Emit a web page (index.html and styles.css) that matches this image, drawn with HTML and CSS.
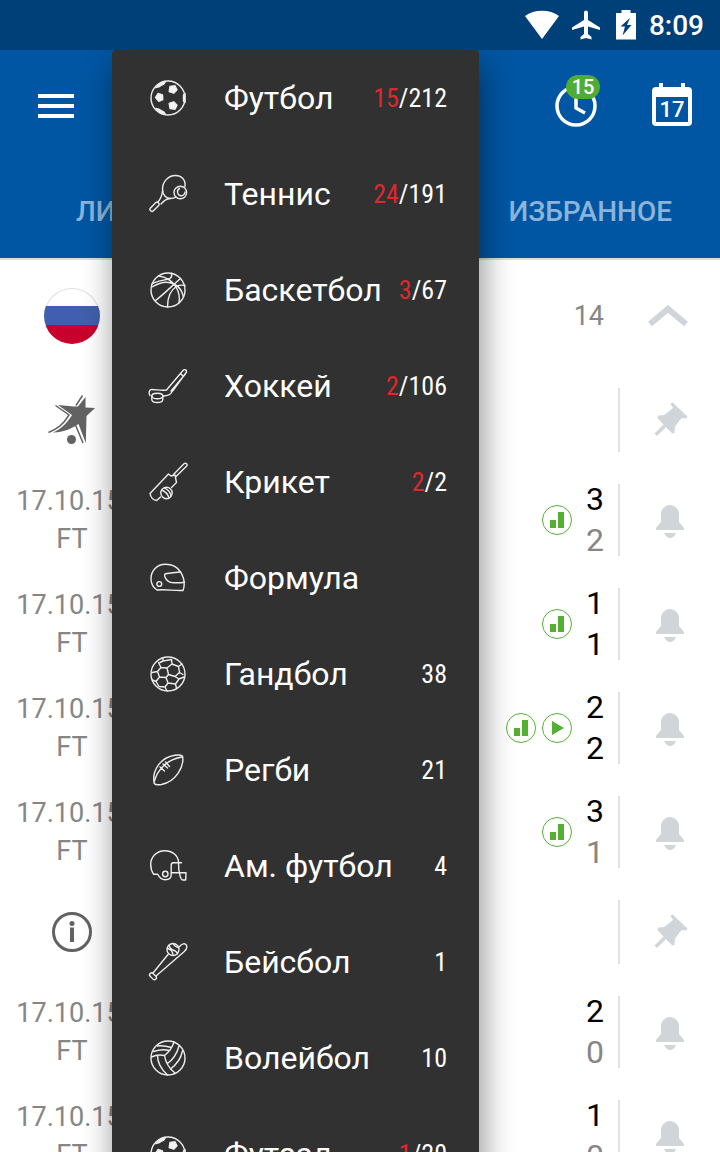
FILE: index.html
```html
<!DOCTYPE html>
<html lang="ru">
<head>
<meta charset="utf-8">
<meta name="viewport" content="width=device-width, initial-scale=1">
<title>Футбол</title>
<link rel="stylesheet" href="styles.css">
</head>
<body>
<svg class="sprite" aria-hidden="true">
  <symbol id="soccer" viewBox="0 0 40 40">
    <circle cx="20" cy="20" r="17"/>
    <g class="solid">
      <path d="M10 15.500l4.500 1.500.3 4.500-4 1.800-3.300-3.800z"/>
      <path d="M22 8.500l5-.8 2 4-3.300 3.500-4.500-1.500z"/>
      <path d="M21.200 25.300l4.500-1.500 3.300 3.500-2 4-5-.8z"/>
      <path d="M8 9.500l4.500-4.300 5-1.700-1.500 2.500-4.500 2.500z"/>
      <path d="M8 30.500l4.500 4.300 5 1.700-1.500-2.500-4.500-2.500z"/>
      <path d="M37 15.500v9l-1.500-1.500v-6z"/>
    </g>
  </symbol>
  <symbol id="tennis" viewBox="0 0 40 40">
    <path d="M37 12.500C37.800 5 33 1.500 27.500 1.500 20 1.500 14.500 8 14.500 15c0 6 3.500 9.500 8 9.500 2 0 4-.5 5.500-1.500"/>
    <circle cx="32.300" cy="18.500" r="6.300"/>
    <path d="M31.500 14.500c-3 1.500-2.500 6 .5 7 2.500.8 5-1 5-3.500"/>
    <path d="M14.500 17c-.5 5-2 8-4.500 11M22 24.500c-4 .5-6.500 2.500-9 5.500"/>
    <rect x="-2" y="-5.500" width="4" height="11" rx="1.500" transform="translate(6.500 32.800) rotate(45)"/>
  </symbol>
  <symbol id="basketball" viewBox="0 0 40 40">
    <circle cx="20" cy="20" r="17"/>
    <path d="M7.500 30.500C15 25 26 14 32.500 8.500M11 6c9 1.500 14 6 17 11 3 5 4 10 3 16M4 17c8-5 16-6 22-3 5 2.500 8 6 9.500 13M19.500 37c0-9 3-17 9-20.500 3-1.700 6-1.500 8.500-1M4 14C10 10 18 10.500 22 8.500c1.500-1 2-3 1.500-5"/>
  </symbol>
  <symbol id="hockey" viewBox="0 0 40 40">
    <path d="M35 4.500c1-1.500 4-1 3.500 1.500L25 24.500c-2.500 4-4.500 5.500-10 5.500M35 4.500L18.500 24c-5 1-10-.5-15-.5-2.500 0-3 4-1.500 6M37 8.500L23 25M32.500 7.500l2.500 2.500"/>
    <ellipse cx="9.300" cy="30" rx="5.500" ry="2.700"/>
    <path d="M3.800 30v3.500c0 4 11 4 11 0V30"/>
  </symbol>
  <symbol id="cricket" viewBox="0 0 40 40">
    <path d="M12.500 35L8.700 38.500c-3-.5-6-3-6.700-7L20.500 12l2.500 2 4-1 1.500 7.500-5 5"/>
    <path d="M25.500 12.500L36 1.800c2-1.500 4 .8 2.500 2.500L28 14.500"/>
    <circle cx="18.500" cy="31" r="5.700"/>
    <path d="M14 28c3 1.500 6 4 7 8M16.500 25.800c3 1.500 6 4.500 6.500 8"/>
  </symbol>
  <symbol id="helmet" viewBox="0 0 40 40">
    <path d="M32.500 14C29 8.500 23 6.300 17.500 6.300 9 6.300 3 12.500 3 20.500c0 5 2 9 6 11.500 9-1 17 1 26 .5 1.500-4 1.500-8 .5-12-.7-2.500-1.500-4.500-3-6.500z"/>
    <path d="M32.500 14c-6 .5-10 1-15 1.800-2.500.5.500 8 6 8.700 5 .5 8 .5 13-.3"/>
    <circle cx="11.300" cy="26" r="2.400"/>
  </symbol>
  <symbol id="handball" viewBox="0 0 40 40">
    <circle cx="20" cy="20" r="17"/>
    <path d="M19 14l5-4 6.500 2.500 1 6-4.500 4-6.500-2zM24 10l-.5-4.500M23.500 5.500L15 7l-3 1.500M15 4v3M30.500 12.500L34 10M31.500 18.500l3.500 2M19 14l-6-.5-3.500 4 2 5.500 6.500.5 2.500-3M13 13.500L10.500 8.500M9.500 17.500L4 18.500M11.500 23L8 27.500l3 5M8 27.500L4.500 26M18 23.500l2 5.500-3 4M20 29l7.500 1 3.500-5-4-2.500M31 25l5-2M27.500 30l1 4.500M17 33l-6-.5M17 33l2 4"/>
  </symbol>
  <symbol id="rugby" viewBox="0 0 40 40">
    <path d="M34.500 6c2 11-7 26-21 28.500-3.500.5-6.500 0-7.200-1C3.500 21 12 7.500 27 5.300c3-.4 6-.3 7.500.7z"/>
    <path d="M6.500 31C9 21 18 9.500 34 7M12 17l4.500 4M15 14l4.500 4M17.500 12l4 4.500"/>
  </symbol>
  <symbol id="gridiron" viewBox="0 0 40 40">
    <path d="M30.700 16.500C30 9 24 4.700 16.800 4.700 8.500 4.700 2.700 11 2.700 18.500c0 3.500 1 7 3 9.800h4c1.500 3 4 5.500 7.500 5.500 4 0 6-1.800 6-5V19c0-1.500.8-2.300 2.300-2.300h8"/>
    <circle cx="17.300" cy="28" r="2.700"/>
    <path d="M23.500 26.700H38l-.3 7.300h-3.200c-1.500 0-4-6.500-4-17.300"/>
  </symbol>
  <symbol id="baseball" viewBox="0 0 40 40">
    <circle cx="25" cy="7.500" r="6"/>
    <path d="M21 3.500c1 2 1 3.500 4 4.500s4 2 4.500 3.500M19.500 6.500c3 .5 5 2.500 5.500 6.500M25.500 1.800c.5 2 2.500 3 5 3.700"/>
    <path d="M31.500 4.500C34 1.500 37 1 38.300 3c1.200 2 .2 4.500-2.300 6.800L8 34M20 12.500L5 31"/>
    <rect x="-4" y="-2" width="8" height="4" rx="2" transform="translate(5 34.300) rotate(45)"/>
  </symbol>
  <symbol id="volleyball" viewBox="0 0 40 40">
    <circle cx="20" cy="20" r="17"/>
    <path d="M16.500 17.500C21 14 24.500 9 26 4M16.500 17.500C12 16.500 7.500 17 3.500 19M16.500 17.500C17.500 24 20.500 30 27 35M21 12.500C15 11 10 12 5.500 13.500M23.500 9.500C18 8 13.500 7.500 9.500 8M9.500 17.500c0 7 4 14 10 19.500M19.500 25.500c5.500-4 9.500-10 11.500-17.500M22.500 31c6-4.500 10.500-11 12-18"/>
  </symbol>
  <symbol id="pin" viewBox="0 0 36 36">
    <path d="M18.500 2l2-1.500L35.500 14.500l-1.500 2-4.500-.5-6.500 8.500-.5 6.500-2 .5-6.500-6.500-9 9-2.500-2.500 9-9L5.500 16l.8-2.500 6.200-.5 8.500-7z"/>
  </symbol>
  <symbol id="bell" viewBox="0 0 28 34">
    <path d="M5 9a9 9 0 0 1 18 0v8l5 6v2H0v-2l5-6zM8 28h12c-1.500 3-3.500 5-6 5s-4.500-2-6-5z"/>
  </symbol>
  <symbol id="stats" viewBox="0 0 30 30">
    <circle cx="15" cy="15" r="14.500"/>
    <path d="M8 15h6v8H8zM16 7h6v16h-6z"/>
  </symbol>
  <symbol id="play" viewBox="0 0 30 30">
    <circle cx="15" cy="15" r="14.500"/>
    <path d="M10 8l12 7-12 7z"/>
  </symbol>
</svg>

<div class="app">
  <div class="statusbar">
    <svg width="34" height="30" viewBox="0 0 34 30"><path d="M17 29L0 6C9-1 25-1 34 6z"/></svg>
    <svg width="28" height="30" viewBox="0 0 28 30"><path d="M12 2.500a2 2 0 0 1 4 0V10l12 7.500V20l-12-3.500v7.500l3.500 3V29.500L14 28l-5.500 1.500V27l3.500-3v-7.500L0 20v-2.500L12 10z"/></svg>
    <svg width="20" height="30" viewBox="0 0 20 30"><path fill-rule="evenodd" d="M5.500 0h9v3H20v26.500H0V3h5.500zM14 8L4.500 16.500H9L6.500 25.500 15.500 15H11z"/></svg>
    <span class="time">8:09</span>
  </div>

  <div class="stage">
    <header class="header">
      <div class="toolbar">
        <button class="icon-button menu-button" aria-label="Меню"><i></i><i></i><i></i></button>
        <button class="icon-button clock" aria-label="Идут сейчас">
          <svg width="42" height="42" viewBox="0 0 42 42"><circle cx="21" cy="21" r="19"/><path d="M21 10v13l9 5"/></svg>
          <span class="badge">15</span>
        </button>
        <button class="icon-button calendar" aria-label="Календарь">
          <svg width="40" height="44" viewBox="0 0 40 44"><path fill-rule="evenodd" d="M7 0h4v4h18V0h4v4h3q4 0 4 4v31q0 4-4 4H4q-4 0-4-4V8q0-4 4-4h3zM4 14v25h32V14z"/></svg>
          <span class="day">17</span>
        </button>
      </div>
      <nav class="tabs">
        <button class="tab">ЛИГИ</button>
        <button class="tab">ИЗБРАННОЕ</button>
      </nav>
    </header>

    <main class="list">
      <div class="row country">
        <div class="lead"><span class="flag"></span></div>
        <span class="total">14</span>
        <button class="icon-button side" aria-label="Свернуть"><svg class="chevron" width="40" height="22" viewBox="0 0 40 22"><path d="M2 19L20 4l18 15"/></svg></button>
      </div>

      <div class="row league">
        <div class="lead">
          <svg class="emblem" width="48" height="52" viewBox="0 0 48 52">
            <path d="M10 11l16 1.500h4l7.500-9.500v10.500l9.500.5-8.500 8-.7 27-7.300-19C25 33.500 18 38 5 38.500 14 34.500 19 29 24 21z"/>
            <path class="trim" d="M7.500 11.500L21 21C15 31 9 35 .5 38.500M34.500 1.500L28 11.500M27.500 31l7.500 18"/>
            <circle cx="23.500" cy="45.500" r="4.500"/>
          </svg>
        </div>
        <button class="icon-button side ruled" aria-label="Закрепить"><svg class="mark" width="36" height="36"><use href="#pin"/></svg></button>
      </div>

      <div class="row match">
        <div class="lead"><span class="date">17.10.15</span><span>FT</span></div>
        <div class="info"><svg width="30" height="30"><use href="#stats"/></svg></div>
        <div class="score"><b>3</b><span>2</span></div>
        <button class="icon-button side ruled" aria-label="Уведомлять"><svg class="mark" width="28" height="34"><use href="#bell"/></svg></button>
      </div>
      <div class="row match">
        <div class="lead"><span class="date">17.10.15</span><span>FT</span></div>
        <div class="info"><svg width="30" height="30"><use href="#stats"/></svg></div>
        <div class="score"><b>1</b><b>1</b></div>
        <button class="icon-button side ruled" aria-label="Уведомлять"><svg class="mark" width="28" height="34"><use href="#bell"/></svg></button>
      </div>
      <div class="row match">
        <div class="lead"><span class="date">17.10.15</span><span>FT</span></div>
        <div class="info"><svg width="30" height="30"><use href="#stats"/></svg><svg width="30" height="30"><use href="#play"/></svg></div>
        <div class="score"><b>2</b><b>2</b></div>
        <button class="icon-button side ruled" aria-label="Уведомлять"><svg class="mark" width="28" height="34"><use href="#bell"/></svg></button>
      </div>
      <div class="row match">
        <div class="lead"><span class="date">17.10.15</span><span>FT</span></div>
        <div class="info"><svg width="30" height="30"><use href="#stats"/></svg></div>
        <div class="score"><b>3</b><span>1</span></div>
        <button class="icon-button side ruled" aria-label="Уведомлять"><svg class="mark" width="28" height="34"><use href="#bell"/></svg></button>
      </div>

      <div class="row league">
        <div class="lead">
          <svg class="about" width="40" height="40" viewBox="0 0 40 40"><circle class="ring" cx="20" cy="20" r="18.500"/><circle cx="20" cy="11.500" r="2.500"/><path d="M18 15.500h4V30h-4z"/></svg>
        </div>
        <button class="icon-button side ruled" aria-label="Закрепить"><svg class="mark" width="36" height="36"><use href="#pin"/></svg></button>
      </div>

      <div class="row match">
        <div class="lead"><span class="date">17.10.15</span><span>FT</span></div>
        <div class="score"><b>2</b><span>0</span></div>
        <button class="icon-button side ruled" aria-label="Уведомлять"><svg class="mark" width="28" height="34"><use href="#bell"/></svg></button>
      </div>
      <div class="row match">
        <div class="lead"><span class="date">17.10.15</span><span>FT</span></div>
        <div class="score"><b>1</b><span>0</span></div>
        <button class="icon-button side ruled" aria-label="Уведомлять"><svg class="mark" width="28" height="34"><use href="#bell"/></svg></button>
      </div>
    </main>

    <nav class="sports" aria-label="Виды спорта">
      <button class="sport"><svg width="40" height="40"><use href="#soccer"/></svg><span>Футбол</span><span class="count"><em>15</em>/212</span></button>
      <button class="sport"><svg width="40" height="40"><use href="#tennis"/></svg><span>Теннис</span><span class="count"><em>24</em>/191</span></button>
      <button class="sport"><svg width="40" height="40"><use href="#basketball"/></svg><span>Баскетбол</span><span class="count"><em>3</em>/67</span></button>
      <button class="sport"><svg width="40" height="40"><use href="#hockey"/></svg><span>Хоккей</span><span class="count"><em>2</em>/106</span></button>
      <button class="sport"><svg width="40" height="40"><use href="#cricket"/></svg><span>Крикет</span><span class="count"><em>2</em>/2</span></button>
      <button class="sport"><svg width="40" height="40"><use href="#helmet"/></svg><span>Формула</span></button>
      <button class="sport"><svg width="40" height="40"><use href="#handball"/></svg><span>Гандбол</span><span class="count">38</span></button>
      <button class="sport"><svg width="40" height="40"><use href="#rugby"/></svg><span>Регби</span><span class="count">21</span></button>
      <button class="sport"><svg width="40" height="40"><use href="#gridiron"/></svg><span>Ам. футбол</span><span class="count">4</span></button>
      <button class="sport"><svg width="40" height="40"><use href="#baseball"/></svg><span>Бейсбол</span><span class="count">1</span></button>
      <button class="sport"><svg width="40" height="40"><use href="#volleyball"/></svg><span>Волейбол</span><span class="count">10</span></button>
      <button class="sport"><svg width="40" height="40"><use href="#soccer"/></svg><span>Футзал</span><span class="count"><em>1</em>/20</span></button>
    </nav>
  </div>
</div>
</body>
</html>
```

FILE: styles.css
```css
* {
  box-sizing: border-box;
}

body {
  margin: 0;
  background: #fff;
  font-family: Roboto, "Noto Sans", sans-serif;
}

button {
  margin: 0;
  padding: 0;
  border: 0;
  background: none;
  color: inherit;
  font: inherit;
  cursor: pointer;
}

svg {
  display: block;
  flex: none;
}

.sprite {
  position: absolute;
  width: 0;
  height: 0;
}

.app {
  display: flex;
  flex-direction: column;
  height: 100vh;
  overflow: hidden;
}

.statusbar {
  display: flex;
  align-items: center;
  justify-content: flex-end;
  gap: 13px;
  flex: none;
  height: 50px;
  padding: 0 16px;
  background: #004078;
  color: #fff;
  fill: #fff;
}

.statusbar svg:nth-of-type(3) {
  margin-left: 3px;
}

.time {
  font-size: 28px;
  font-weight: 500;
}

.stage {
  position: relative;
  flex: 1;
  min-height: 0;
  overflow: hidden;
}

.header {
  background: #0056a3;
  border-bottom: 2px solid #d9dee6;
}

.toolbar {
  display: flex;
  align-items: center;
  gap: 55px;
  height: 112px;
  padding: 0 28px 0 38px;
}

.icon-button {
  display: flex;
  align-items: center;
  justify-content: center;
  position: relative;
}

.menu-button {
  flex-direction: column;
  gap: 6px;
  width: 36px;
  margin-right: auto;
}

.menu-button i {
  width: 100%;
  height: 4px;
  background: #fff;
}

.clock svg {
  fill: none;
  stroke: #fff;
  stroke-width: 3.5;
}

.badge {
  position: absolute;
  top: -10px;
  right: -3px;
  width: 34px;
  border-radius: 12px;
  background: #50ad33;
  color: #fff;
  font-size: 20px;
  font-weight: 500;
  line-height: 24px;
  text-align: center;
}

.calendar {
  padding-bottom: 2px;
}

.calendar svg {
  fill: #fff;
}

.day {
  position: absolute;
  inset: 14px 0 6px;
  color: #fff;
  font-size: 22px;
  font-weight: 500;
  line-height: 26px;
  text-align: center;
}

.tabs {
  display: flex;
  align-items: center;
  justify-content: space-between;
  height: 96px;
  padding: 2px 48px 0 76px;
}

.tab {
  color: #8cb4d9;
  font-size: 28px;
  font-weight: 500;
}

.row {
  display: flex;
  align-items: center;
  justify-content: flex-end;
}

.country {
  height: 112px;
}

.league {
  height: 96px;
}

.match {
  height: 104px;
}

.lead {
  display: flex;
  flex-direction: column;
  align-items: center;
  width: 144px;
  margin-right: auto;
  color: #868686;
  font-size: 27px;
  line-height: 38px;
}

.date {
  padding-right: 6px;
}

.flag {
  width: 56px;
  height: 56px;
  border: 1px solid transparent;
  border-radius: 50%;
  background:
    linear-gradient(#fff 32%, #415fae 32% 67%, #c8002c 67%) padding-box,
    linear-gradient(#dedee3 32%, #415fae 32% 67%, #c8002c 67%) border-box;
}

.emblem {
  fill: #626262;
}

.emblem .trim {
  fill: none;
  stroke: #626262;
  stroke-width: 1.5;
}

.about {
  fill: #626262;
}

.about .ring {
  fill: none;
  stroke: #626262;
  stroke-width: 3;
}

.total {
  padding-right: 14px;
  color: #868686;
  font-size: 27px;
}

.side {
  width: 102px;
  height: 72px;
  border-left: 2px solid transparent;
}

.country .side {
  padding-right: 4px;
}

.league .side {
  height: 64px;
}

.match .side {
  padding-top: 4px;
}

.ruled {
  border-color: #dfe2e4;
}

.chevron {
  fill: none;
  stroke: #cfd5d9;
  stroke-width: 6;
}

.mark {
  fill: #cfd5d9;
}

.info {
  display: flex;
  gap: 6px;
  padding-right: 14px;
}

.info svg {
  fill: #55b031;
}

#stats circle,
#play circle {
  fill: #fff;
  stroke: #55b031;
}

.score {
  display: flex;
  flex-direction: column;
  padding-right: 14px;
  color: #868686;
  font-size: 32px;
  line-height: 41px;
}

.score b {
  color: #000;
  font-weight: 400;
}

.sports {
  position: absolute;
  top: 0;
  left: 112px;
  width: 367px;
  border-radius: 4px;
  background: #303130;
  box-shadow: 3px 16px 32px rgba(0, 0, 0, 0.45);
  color: #fff;
}

.sport {
  display: flex;
  align-items: center;
  width: 100%;
  height: 96px;
  padding: 0 32px 0 36px;
  font-size: 32px;
  text-align: left;
}

.sport svg {
  margin-right: 36px;
  fill: none;
  stroke: #eee;
  stroke-width: 1.4;
  stroke-linecap: round;
  stroke-linejoin: round;
}

.solid {
  fill: #f4f4f4;
}

.count {
  margin-left: auto;
  font-family: "Roboto Condensed", Roboto, sans-serif;
  font-size: 26px;
}

.count em {
  color: #e0262e;
  font-style: normal;
}
```
